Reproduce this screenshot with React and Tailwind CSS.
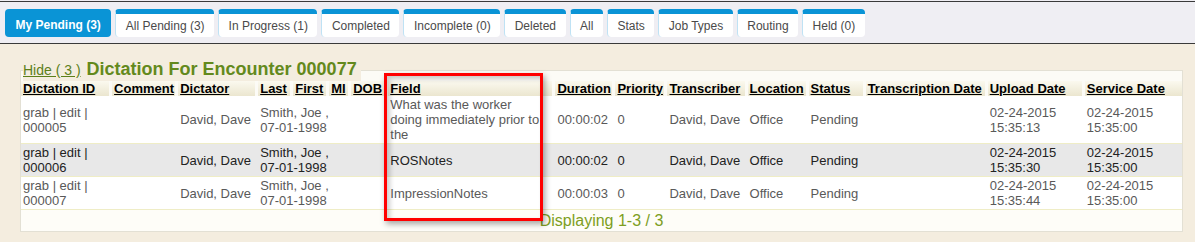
import React from "react";

const tabs = [
  "My Pending (3)",
  "All Pending (3)",
  "In Progress (1)",
  "Completed",
  "Incomplete (0)",
  "Deleted",
  "All",
  "Stats",
  "Job Types",
  "Routing",
  "Held (0)",
];

const columns = [
  { label: "Dictation ID", w: 91 },
  { label: "Comment", w: 66 },
  { label: "Dictator", w: 80 },
  { label: "Last", w: 35 },
  { label: "First", w: 36 },
  { label: "MI", w: 22 },
  { label: "DOB", w: 37 },
  { label: "Field", w: 167 },
  { label: "Duration", w: 60 },
  { label: "Priority", w: 52 },
  { label: "Transcriber", w: 80 },
  { label: "Location", w: 61 },
  { label: "Status", w: 57 },
  { label: "Transcription Date", w: 122 },
  { label: "Upload Date", w: 97 },
  { label: "Service Date", w: 97 },
];

const rows = [
  {
    id: "000005",
    field: "What was the worker doing immediately prior to the",
    duration: "00:00:02",
    upload: "02-24-2015 15:35:13",
  },
  { id: "000006", field: "ROSNotes", duration: "00:00:02", upload: "02-24-2015 15:35:30" },
  { id: "000007", field: "ImpressionNotes", duration: "00:00:03", upload: "02-24-2015 15:35:44" },
];

const App = () => {
  return (
    <div className="relative w-[1195px] h-[242px] overflow-hidden bg-[#f4eddf] font-['Liberation_Sans',Arial,sans-serif]">
      {/* tab strip */}
      <div className="bg-[#efeef3] pt-px">
        <div className="h-[43px] border-t border-b border-[#3a3a3a] flex items-start gap-[4px] pl-[5px] pt-[7px]">
          {tabs.map((t, i) =>
            i === 0 ? (
              <div
                key={t}
                className="h-[28px] px-[10.5px] rounded-[4px] bg-[#0a94d6] text-white font-bold text-[12px] pt-[4px] flex items-center"
              >
                {t}
              </div>
            ) : (
              <div
                key={t}
                className="h-[28px] rounded-[4px] bg-white border-t-[5px] border-t-[#0a94d6] border-l border-l-[#bfe2f4] text-[#4a4a4a] text-[12px] flex items-center px-[9.5px]"
              >
                {t}
              </div>
            )
          )}
        </div>
      </div>

      <fieldset className="mt-[15px] ml-[20px] w-[1163px] border border-[#e3e0d4] bg-[#fcfbf6]">
        <legend className="ml-[2px] flex items-baseline gap-[6px] pr-[4px] bg-[#f4eddf]">
          <a className="text-[14px] underline text-[#5c7f1a] leading-[21px]">Hide ( 3 )</a>
          <span className="text-[18px] font-bold text-[#63891c] leading-[21px]">
            Dictation For Encounter 000077
          </span>
        </legend>

        <table className="table-fixed border-collapse w-[1161px] text-[13px] leading-[15px]">
          <colgroup>
            {columns.map((c) => (
              <col key={c.label} style={{ width: c.w }} />
            ))}
          </colgroup>
          <thead>
            <tr>
              {columns.map((c, i) => (
                <th
                  key={c.label}
                  className={`p-0 text-left font-bold ${i === columns.length - 1 ? "" : "pr-[3px]"}`}
                >
                  <div className="h-[15px] pl-[2px] bg-gradient-to-b from-[#fbf9ef] to-[#ebe6cf] whitespace-nowrap overflow-hidden">
                    <span className="underline text-black">{c.label}</span>
                  </div>
                </th>
              ))}
            </tr>
          </thead>
          <tbody>
            {rows.map((r, i) => (
              <tr
                key={r.id}
                className={`border-b border-[#efedc6] ${
                  i === 1 ? "bg-[#e8e8e8] text-[#222]" : "bg-white text-[#595959]"
                }`}
              >
                <td className="px-[2px] py-px align-middle">grab | edit | {r.id}</td>
                <td className="px-[2px]"></td>
                <td className="px-[2px] whitespace-nowrap">David, Dave</td>
                <td colSpan={4} className="px-[2px]">
                  Smith, Joe , <span className="whitespace-nowrap">07-01-1998</span>
                </td>
                <td className="px-[2px] py-px">
                  <div className="w-[152px]">{r.field}</div>
                </td>
                <td className="px-[2px]">{r.duration}</td>
                <td className="px-[2px]">0</td>
                <td className="px-[2px] whitespace-nowrap">David, Dave</td>
                <td className="px-[2px]">Office</td>
                <td className="px-[2px]">Pending</td>
                <td className="px-[2px]"></td>
                <td className="px-[2px]">{r.upload}</td>
                <td className="px-[2px]">02-24-2015 15:35:00</td>
              </tr>
            ))}
            <tr className="bg-[#fefdf8]">
              <td colSpan={16} className="h-[21px] text-center text-[16px] leading-[21px] text-[#7d9e22]">
                Displaying 1-3 / 3
              </td>
            </tr>
          </tbody>
        </table>
      </fieldset>

      {/* highlight annotation over the Field column */}
      <div className="absolute left-[384px] top-[73px] w-[159px] h-[148px] border-[3px] border-[#ff0000] shadow-[2px_3px_6px_rgba(0,0,0,0.35),inset_3px_3px_5px_rgba(0,0,0,0.2)]"></div>
    </div>
  );
};

export default App;
